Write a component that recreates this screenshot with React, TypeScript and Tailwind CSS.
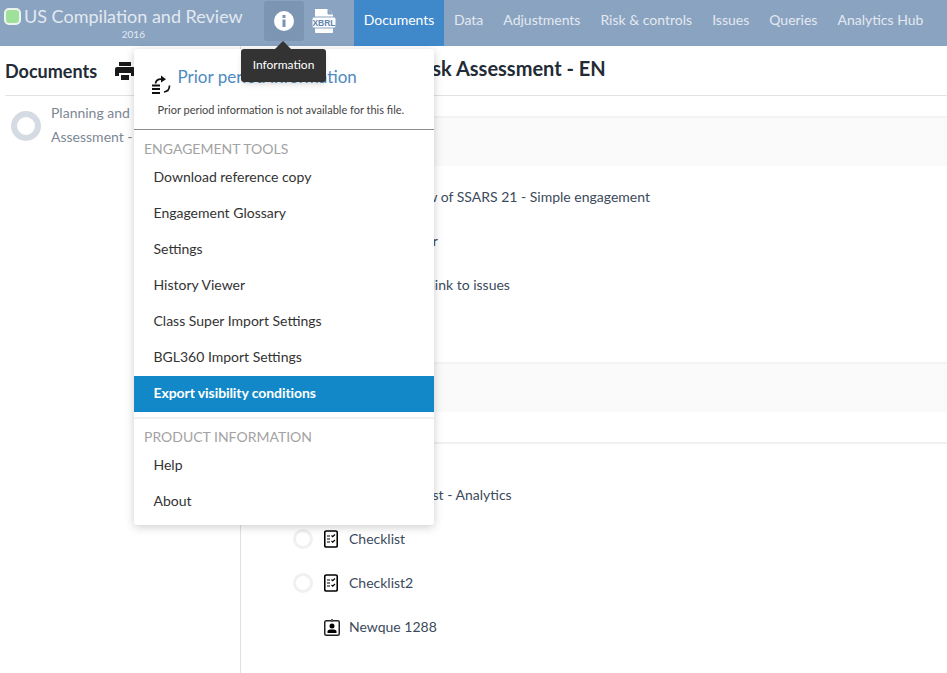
const navItems = ["Data", "Adjustments", "Risk & controls", "Issues", "Queries", "Analytics Hub"];

const toolItems = [
  "Download reference copy",
  "Engagement Glossary",
  "Settings",
  "History Viewer",
  "Class Super Import Settings",
  "BGL360 Import Settings",
];

function ChecklistIcon() {
  return (
    <svg width="14" height="18" viewBox="0 0 14 18" fill="none" stroke="#000" className="shrink-0">
      <rect x="0.75" y="1" width="12.5" height="16" rx="1.5" strokeWidth="1.6" />
      <path d="M3 6h3M3 9h3M3 12h3" strokeWidth="1.2" />
      <path d="M7.5 5.5l1.2 1.2L11 4.5M7.5 11l1.2 1.2L11 10" strokeWidth="1.2" />
    </svg>
  );
}

function ContactIcon() {
  return (
    <svg width="16" height="17" viewBox="0 0 16 17" className="shrink-0">
      <rect x="0.75" y="1.75" width="14.5" height="14.5" rx="1.5" fill="none" stroke="#222" strokeWidth="1.5" />
      <rect x="7" y="0" width="2" height="3" fill="#555" />
      <circle cx="8" cy="7" r="2.5" fill="#000" />
      <path d="M3.5 14v-1.5c0-1 1-2 2.5-2h4c1.5 0 2.5 1 2.5 2V14z" fill="#000" />
    </svg>
  );
}

function PriorIcon() {
  return (
    <svg width="20" height="22" viewBox="0 0 20 22" fill="none" className="shrink-0">
      <path d="M4.5 8.5C5 5.5 7.5 4 10.5 4.2" stroke="#111" strokeWidth="1.7" />
      <path d="M10 0.5l5 3.7-5 3.3z" fill="#111" />
      <path d="M18.5 10.5c0 3.5-2 6-5.5 6.5" stroke="#111" strokeWidth="1.7" />
      <path d="M1 10.5h8M1 14h8M1 18h8" stroke="#111" strokeWidth="2" />
    </svg>
  );
}

function XbrlIcon() {
  return (
    <svg width="26" height="26" viewBox="0 0 26 26">
      <path d="M4 1h13l5 5v18a1 1 0 0 1-1 1H5a1 1 0 0 1-1-1z" fill="#fff" />
      <path d="M17 1v5h5" fill="#8aa3c0" stroke="#8aa3c0" strokeWidth="1" />
      <rect x="1" y="9" width="24" height="11" rx="2" fill="#fff" stroke="#8aa3c0" strokeWidth="1" />
      <text x="13" y="18" textAnchor="middle" fontSize="8.5" fontWeight="700" fill="#5f83ad" fontFamily="Liberation Sans, sans-serif">
        XBRL
      </text>
    </svg>
  );
}

function Row({ label, icon, ring = true }: { label: string; icon?: React.ReactNode; ring?: boolean }) {
  return (
    <div className="flex h-11 items-center">
      <div className="flex w-[31px] justify-start">
        {ring && <span className="h-5 w-5 rounded-full border-[3px] border-[#f0f0f0]" />}
      </div>
      <div className="flex w-[25px] justify-start">{icon}</div>
      <span className="whitespace-nowrap text-sm text-[#3b4a5c]">{label}</span>
    </div>
  );
}

function Band() {
  return <div className="h-[50px] border-t-2 border-[#f3f3f3] bg-[#fafafa]" />;
}

export default function App() {
  return (
    <div className="relative h-[673px] w-[947px] overflow-hidden bg-white font-['Lato','Liberation_Sans',sans-serif] text-[#333]">
      <header className="flex h-[46px] items-stretch bg-[#8aa3c0]">
        <div className="flex w-[264px] pl-[4px] pt-[1px]">
          <span className="mt-[7px] h-[17px] w-[17px] rounded-[5px] border-2 border-[#eef3ee] bg-[#9fe09a]" />
          <div className="ml-[3px] flex flex-col items-center">
            <span className="whitespace-nowrap text-[18px] leading-[30px] text-[#e3e9f1]">US Compilation and Review</span>
            <span className="-mt-[3px] text-[10px] leading-3 text-[#e3e9f1]">2016</span>
          </div>
        </div>
        <div className="mt-[1px] flex h-10 w-10 items-center justify-center rounded-[3px] bg-[#7b95b2]">
          <svg width="20" height="20" viewBox="0 0 20 20">
            <circle cx="10" cy="10" r="10" fill="#fff" />
            <rect x="8.5" y="4" width="3" height="3" fill="#7b95b2" />
            <rect x="8.5" y="8.5" width="3" height="7.5" fill="#7b95b2" />
          </svg>
        </div>
        <div className="mr-[10px] flex w-10 items-center justify-center pb-[4px]">
          <XbrlIcon />
        </div>
        <nav className="flex items-stretch text-sm text-[#e3e9f1]">
          <span className="flex w-[90px] items-center justify-center bg-[#3f89cb] pb-[6px] text-white">Documents</span>
          {navItems.map((item) => (
            <span key={item} className="flex items-center px-[10px] pb-[6px] whitespace-nowrap">
              {item}
            </span>
          ))}
        </nav>
      </header>

      <div className="flex h-[627px]">
        <aside className="w-[241px] shrink-0 border-r border-[#e0e0e0]">
          <div className="mx-[5px] flex h-[50px] items-center gap-[18px] border-b border-[#e2e2e2]">
            <h2 className="text-lg leading-none font-bold text-[#222b36]">Documents</h2>
            <svg width="20" height="18" viewBox="0 0 20 18" fill="#1a1a1a">
              <path d="M4 0h12v4H4z" />
              <path d="M2 5h16a2 2 0 0 1 2 2v7h-4v-3H4v3H0V7a2 2 0 0 1 2-2z" />
              <path d="M6 13h8v5H6z" />
            </svg>
          </div>
          <div className="flex pt-[5px] pl-[11px]">
            <span className="mt-[10px] h-[30px] w-[30px] shrink-0 rounded-full border-[6px] border-[#d5dbe2]" />
            <p className="ml-[10px] text-sm leading-6 text-[#7d8794]">
              Planning and Risk
              <br />
              Assessment - EN
            </p>
          </div>
        </aside>

        <main className="min-w-0 flex-1">
          <div className="flex h-[50px] items-center border-b border-[#e2e2e2] pl-[54px]">
            <h1 className="pb-[5px] text-xl font-bold whitespace-nowrap text-[#222b36]">Planning and Risk Assessment - EN</h1>
          </div>
          <div className="mt-5">
            <Band />
          </div>
          <div className="mt-[9px] pl-[52px]">
            <Row label="Interim review of SSARS 21 - Simple engagement" />
            <Row label="Planning letter" />
            <Row label="Planning and link to issues" />
          </div>
          <div className="mt-[55px]">
            <Band />
          </div>
          <div className="mt-[30px] border-t-2 border-[#f0f0f0] pl-[52px] pt-[29px]">
            <Row label="Intake checklist - Analytics" />
            <Row label="Checklist" icon={<ChecklistIcon />} />
            <Row label="Checklist2" icon={<ChecklistIcon />} />
            <Row label="Newque 1288" icon={<ContactIcon />} ring={false} />
          </div>
        </main>
      </div>

      {/* dropdown sits over the page */}
      <div className="absolute top-[49px] left-[134px] w-[300px] rounded-[3px] bg-white shadow-[0_2px_10px_rgba(0,0,0,0.2)]">
        <div className="h-[81px] border-b border-[#8c8c8c]">
          <div className="flex items-start pt-[15px] pl-[17px]">
            <span className="mt-[11px]">
              <PriorIcon />
            </span>
            <span className="ml-[6.5px] text-[17px] whitespace-nowrap text-[#4d8ac0]">Prior period information</span>
          </div>
          <p className="mt-[5px] pl-[23.5px] text-[11px] text-[#444]">Prior period information is not available for this file.</p>
        </div>
        <div className="pt-[10px] pl-[10px] text-sm leading-[18px] text-[#a3a3a3]">ENGAGEMENT TOOLS</div>
        <ul className="mt-[2px] text-sm text-[#333]">
          {toolItems.map((item) => (
            <li key={item} className="flex h-9 items-center pb-[2px] pl-[19.5px]">
              {item}
            </li>
          ))}
          <li className="flex h-9 items-center bg-[#1288c8] pb-[2px] pl-[19.5px] font-bold tracking-[-0.08px] text-white">Export visibility conditions</li>
        </ul>
        <div className="mt-[5px] border-t-2 border-[#f0f0f0] pt-[9px] pl-[10px] text-sm leading-[18px] text-[#a3a3a3]">PRODUCT INFORMATION</div>
        <ul className="mt-[2px] pb-[5px] text-sm text-[#333]">
          <li className="flex h-9 items-center pb-[2px] pl-[19.5px]">Help</li>
          <li className="flex h-9 items-center pb-[2px] pl-[19.5px]">About</li>
        </ul>
      </div>

      {/* tooltip */}
      <div className="absolute top-[49px] left-[241px] flex h-[33px] w-[85px] items-center justify-center rounded-[3px] bg-[#333] pb-[2px] text-xs text-white shadow-md">
        Information
        <span className="absolute -top-[8px] left-[34px] h-0 w-0 border-x-[8px] border-b-[8px] border-x-transparent border-b-[#333]" />
      </div>
    </div>
  );
}
